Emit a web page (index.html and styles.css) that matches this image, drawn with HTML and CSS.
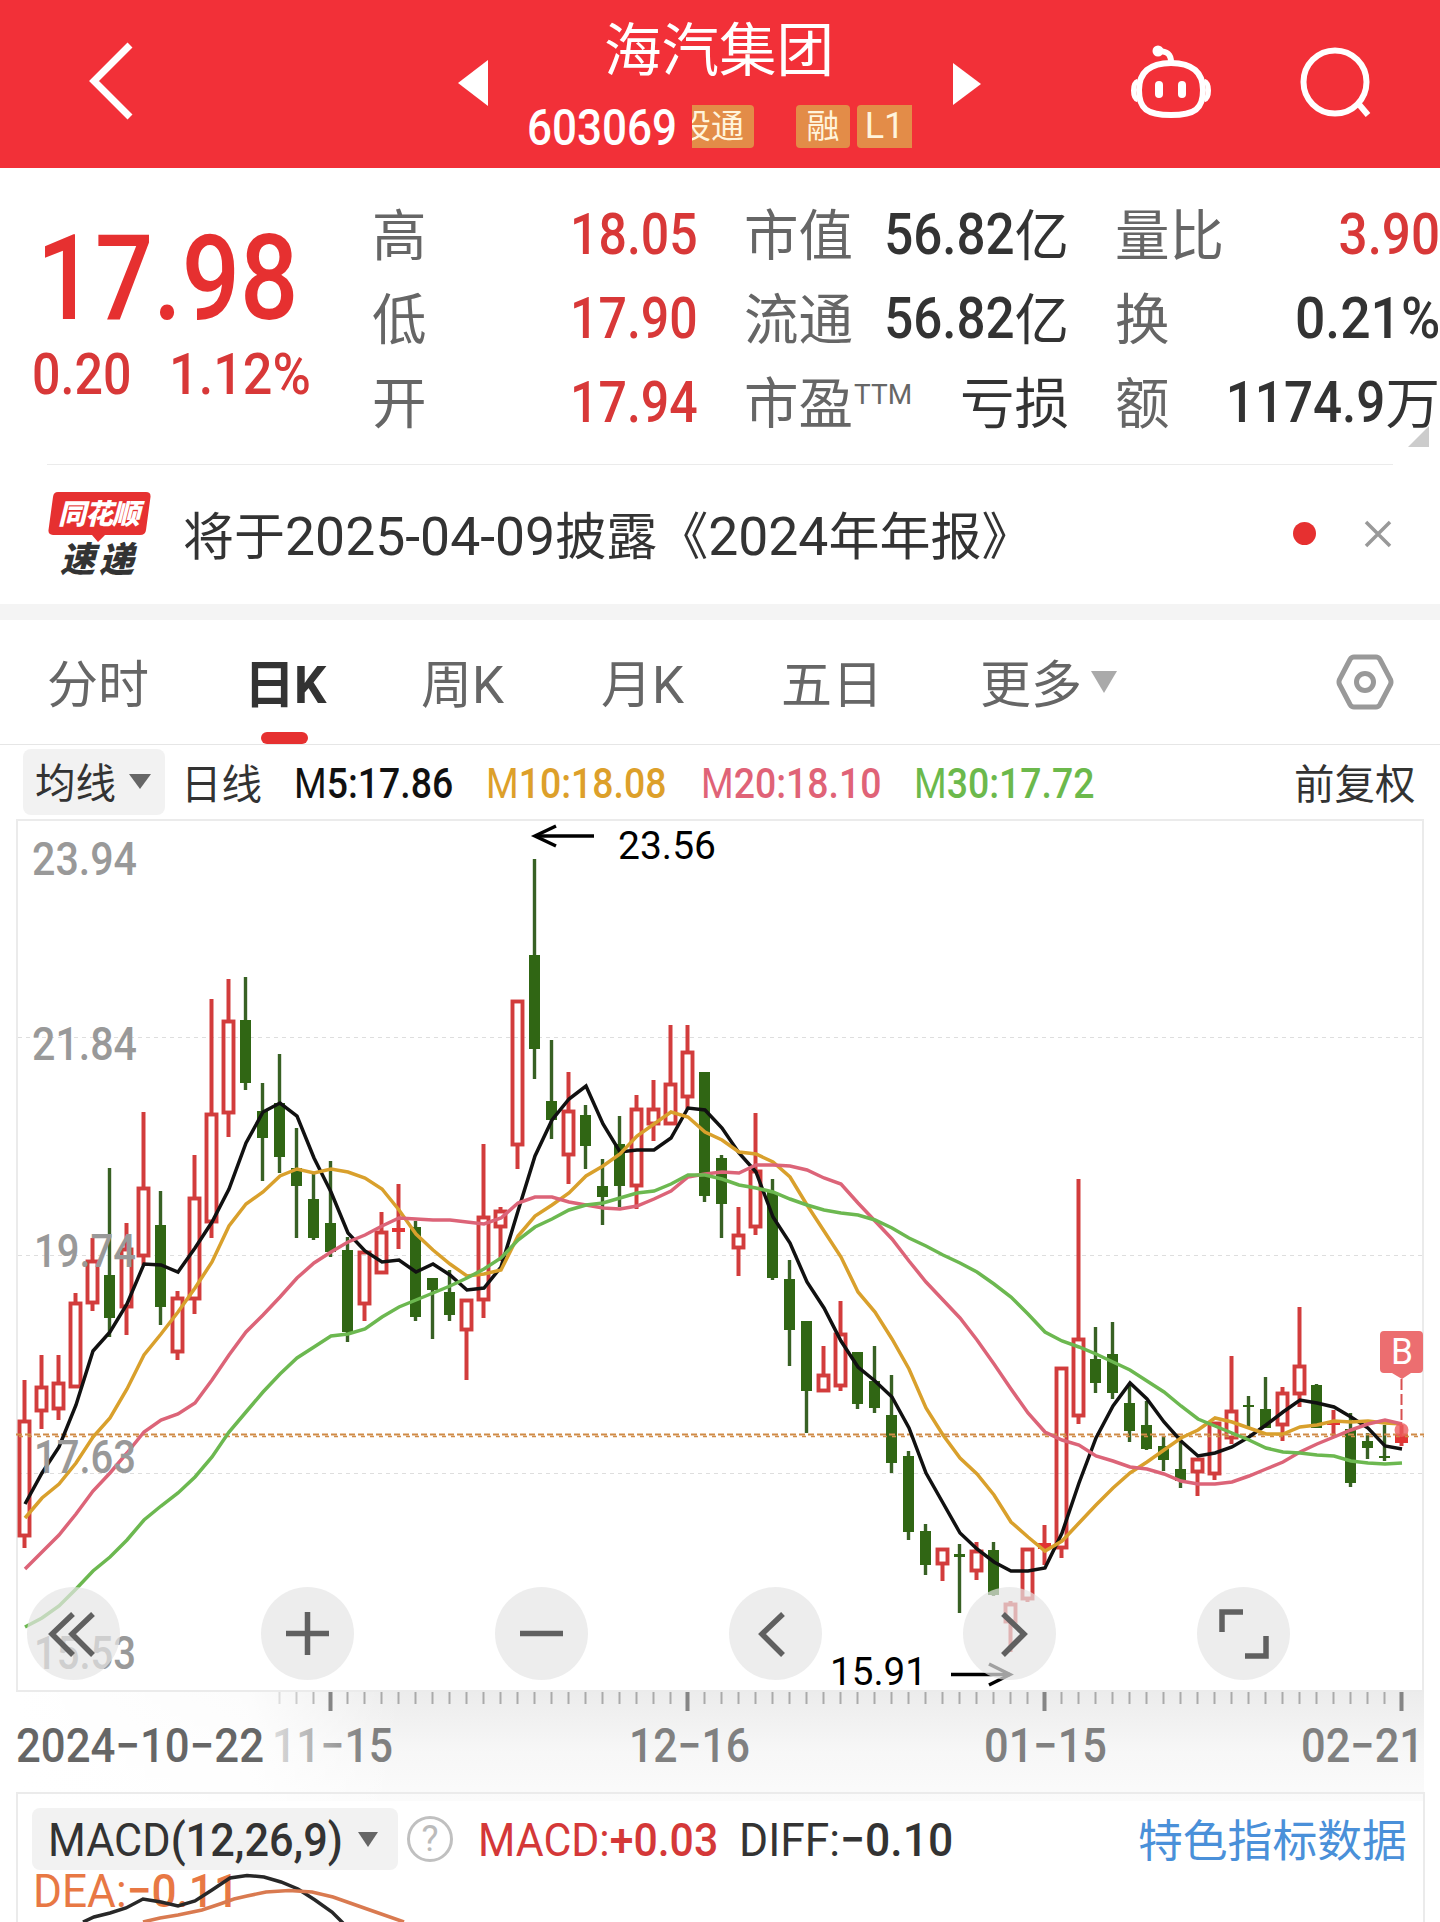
FILE: index.html
```
<!DOCTYPE html>
<html lang="zh-CN">
<head>
    <meta charset="UTF-8">
    <meta name="viewport" content="width=device-width, initial-scale=1.0">
    <title>海汽集团 603069</title>
    <link rel="stylesheet" href="styles.css">
</head>
<body>
    <header class="header">
        <svg class="back" width="50" height="84" viewBox="0 0 50 84"><path d="M42 6 L6 42 L42 78"/></svg>
        <svg class="prev" width="30" height="46" viewBox="0 0 30 46"><path d="M30 0 V46 L0 23z"/></svg>
        <div class="stock">
            <h1>海汽集团</h1>
            <div class="code-row">
                <span class="num code">603069</span>
                <span class="tag tag-cut"><span>设通</span></span>
                <span class="tag tag-rong">融</span>
                <span class="tag tag-l1">L1</span>
            </div>
        </div>
        <svg class="next" width="28" height="42" viewBox="0 0 28 42"><path d="M0 0 V42 L28 21z"/></svg>
        <svg class="robot" width="84" height="78" viewBox="0 0 84 78">
            <path d="M42 20 C64 20 74 30 74 47 C74 66 66 72 42 72 C18 72 10 66 10 47 C10 30 20 20 42 20z"/>
            <path d="M42 19 C42 11 38 8 29 8"/>
            <path class="ear" d="M9 38 C3 40 3 55 9 57 M75 38 C81 40 81 55 75 57"/>
            <circle class="solid" cx="29" cy="8" r="5.5"/>
            <rect class="solid" x="26" y="38" width="8" height="17" rx="4"/>
            <rect class="solid" x="49" y="38" width="8" height="17" rx="4"/>
        </svg>
        <svg class="search" width="76" height="76" viewBox="0 0 76 76">
            <circle cx="38" cy="36" r="31.5"/>
            <path d="M60 56 L71 69"/>
        </svg>
    </header>

    <section class="quote">
        <div class="price">
            <div class="num last">17.98</div>
            <div class="change"><span class="num">0.20</span><span class="num">1.12%</span></div>
        </div>
        <dl class="stats">
            <dt>高</dt><dd class="up"><span class="num">18.05</span></dd>
            <dt>市值</dt><dd><span class="num">56.82</span>亿</dd>
            <dt>量比</dt><dd class="up"><span class="num">3.90</span></dd>
            <dt>低</dt><dd class="up"><span class="num">17.90</span></dd>
            <dt>流通</dt><dd><span class="num">56.82</span>亿</dd>
            <dt>换</dt><dd><span class="num percent">0.21%</span></dd>
            <dt>开</dt><dd class="up"><span class="num">17.94</span></dd>
            <dt>市盈<sup>TTM</sup></dt><dd>亏损</dd>
            <dt>额</dt><dd><span class="num">1174.9</span>万</dd>
        </dl>
        <svg class="corner" width="21" height="21" viewBox="0 0 21 21"><path d="M21 0 V21 H0z"/></svg>
    </section>

    <section class="news">
        <div class="news-logo">
            <svg width="104" height="50" viewBox="0 0 104 50"><path d="M10 0 H98 Q103 0 102.500 5 L98 38 Q97.500 43 92 43 H57 L50 50 L44 43 H5 Q0 43 .5 38 L5 5 Q5.500 0 10 0z"/></svg>
            <b class="logo-top">同花顺</b>
            <b class="logo-bottom">速递</b>
        </div>
        <p>将于<span>2025-04-09</span>披露《<span>2024</span>年年报》</p>
        <i class="dot"></i>
        <svg class="close" width="28" height="28" viewBox="0 0 28 28"><path d="M2 2 L26 26 M26 2 L2 26"/></svg>
    </section>

    <nav class="tabs">
        <a>分时</a>
        <a class="active">日K</a>
        <a>周K</a>
        <a>月K</a>
        <a>五日</a>
        <a class="more">更多<svg width="26" height="22" viewBox="0 0 26 22"><path d="M0 0 H26 L13 22z"/></svg></a>
        <svg class="setting" width="58" height="56" viewBox="0 0 58 56">
            <path d="M18 3 H40 Q42.500 3 44 5.500 L54.500 25.500 Q55.500 28 54.500 30.500 L44 50.500 Q42.500 53 40 53 H18 Q15.500 53 14 50.500 L3.500 30.500 Q2.500 28 3.500 25.500 L14 5.500 Q15.500 3 18 3z"/>
            <circle cx="29" cy="28" r="8.500"/>
        </svg>
    </nav>

    <div class="ma-row">
        <span class="pill">均线<svg width="22" height="15" viewBox="0 0 22 15"><path d="M0 0 H22 L11 15z"/></svg></span>
        <span class="period">日线</span>
        <span class="num ma5"><i>M</i>5:17.86</span>
        <span class="num ma10"><i>M</i>10:18.08</span>
        <span class="num ma20"><i>M</i>20:18.10</span>
        <span class="num ma30"><i>M</i>30:17.72</span>
        <span class="adjust">前复权</span>
    </div>

    <section class="chart">
        <svg id="kline" width="1440" height="873" viewBox="0 819 1440 873"></svg>
        <div class="tools">
            <button><svg viewBox="0 0 93 93"><path d="M46 27 L25 47 L46 68 M66 27 L45 47 L66 68"/></svg></button>
            <button><svg viewBox="0 0 93 93"><path d="M46.500 25 V68 M25 46.500 H68"/></svg></button>
            <button><svg viewBox="0 0 93 93"><path d="M25 46.500 H68"/></svg></button>
            <button><svg viewBox="0 0 93 93"><path d="M54 27 L33 47 L54 68"/></svg></button>
            <button><svg viewBox="0 0 93 93"><path d="M40 27 L61 47 L40 68"/></svg></button>
            <button><svg viewBox="0 0 93 93"><path d="M25 45 V25 H46 M69 49 V69 H48"/></svg></button>
        </div>
    </section>

    <section class="axis">
        <svg id="axis" width="1440" height="109" viewBox="0 1692 1440 109"></svg>
    </section>

    <section class="macd">
        <div class="macd-row">
            <span class="pill"><span class="num"><i>MACD</i>(12,26,9)</span><svg width="20" height="15" viewBox="0 0 20 15"><path d="M0 0 H20 L10 15z"/></svg></span>
            <span class="help">?</span>
            <span class="num macd-val"><i>MACD:</i>+0.03</span>
            <span class="num diff-val"><i>DIFF:</i>−0.10</span>
            <a class="feature">特色指标数据</a>
        </div>
        <span class="num dea-val"><i>DEA:</i>−0.11</span>
        <svg class="macd-lines" width="1440" height="60" viewBox="0 1862 1440 60">
            <path class="diff" d="M83 1922 L94 1917 L110 1913 L126 1908 L143 1899 L161 1902 L178 1906 L195 1901 L212 1890 L230 1878 L247 1875.500 L264 1877 L281 1882 L298 1889 L315 1900 L332 1912 L343 1923"/>
            <path class="dea" d="M143 1922 L160 1918 L178 1915 L202 1910 L220 1904 L234 1899 L247 1896 L266 1892 L289 1890.500 L312 1892 L333 1897 L350 1903 L367 1909 L404 1922"/>
        </svg>
    </section>

    <script src="chart.js"></script>
</body>
</html>
```
FILE: styles.css
```
* {
    box-sizing: border-box;
}
body {
    margin: 0;
    width: 1440px;
    height: 1922px;
    overflow: hidden;
    background: #fff;
    color: #333;
    font-family: Roboto, "Noto Sans CJK SC", sans-serif;
}
h1, p, dl, dd {
    margin: 0;
}
i {
    font-style: normal;
    font-weight: 400;
}
svg {
    display: block;
    flex: none;
}
/* narrow figures */
.num {
    display: inline-block;
    font-weight: 500;
    white-space: nowrap;
    transform: scaleX(.88);
    transform-origin: left center;
}

/* header */
.header {
    display: flex;
    height: 168px;
    background: #f23038;
    color: #fff;
}
.header path,
.header circle {
    fill: none;
    stroke: #fff;
    stroke-width: 6;
}
.header .back path {
    stroke-width: 7;
}
.header .prev path,
.header .next path,
.header .solid {
    fill: #fff;
    stroke: none;
}
.back {
    margin: 39px 0 0 88px;
}
.prev {
    margin: 60px 0 0 320px;
}
.stock {
    width: 424px;
    margin: 0 0 0 41px;
}
.stock h1 {
    height: 101px;
    padding-left: 75px;
    font-size: 57.5px;
    font-weight: 400;
    line-height: 104px;
    white-space: nowrap;
}
.code-row {
    display: flex;
    height: 54px;
    align-items: center;
}
.code {
    width: 163px;
    margin-left: -2px;
    font-size: 50px;
    line-height: 54px;
}
.tag {
    height: 43px;
    margin-top: -3px;
    background: #e38c48;
    border-radius: 4px;
    color: #fff4dc;
    font-size: 33px;
    line-height: 43px;
    text-align: center;
    white-space: nowrap;
}
.tag-cut {
    display: flex;
    flex: none;
    justify-content: flex-end;
    width: 62px;
    margin-left: 2px;
    padding-right: 10px;
    overflow: hidden;
    border-radius: 0 4px 4px 0;
}
.tag-rong {
    width: 54px;
    margin-left: 42px;
}
.tag-l1 {
    width: 55px;
    margin-left: 7px;
    border-radius: 4px 0 0 4px;
    font-size: 36px;
}
.next {
    margin: 63px 0 0 0;
}
.robot {
    margin: 43px 0 0 148px;
}
.robot .ear {
    stroke-width: 5;
}
.search {
    margin: 46px 0 0 84px;
}

/* quote */
.quote {
    position: relative;
    display: flex;
    height: 297px;
}
.quote::after {
    content: "";
    position: absolute;
    left: 47px;
    right: 47px;
    bottom: 0;
    height: 1px;
    background: #ebebeb;
}
.price {
    width: 374px;
    padding-top: 47px;
    color: #e63030;
}
.last {
    height: 125px;
    padding-left: 42px;
    font-size: 118px;
    line-height: 128px;
    transform: scaleX(.87);
}
.change {
    display: flex;
    padding-left: 32px;
    color: #d83838;
    font-size: 57px;
    line-height: 70px;
}
.change .num {
    width: 137px;
}
.change .num + .num {
    transform: scaleX(.915);
}
.stats {
    display: grid;
    grid-template-columns: 150px 173px 184px 137px 200px 222px;
    grid-template-rows: 84px 84px 85px;
    column-gap: 0;
    padding-top: 25px;
    font-size: 54.5px;
    line-height: 86px;
}
.stats dt {
    margin-left: -2px;
    color: #666;
    font-weight: 400;
    white-space: nowrap;
}
.stats dt:nth-of-type(3n+2) {
    margin-left: 47px;
}
.stats dt:nth-of-type(3n) {
    margin-left: 97px;
}
.stats dd {
    display: flex;
    justify-content: flex-end;
    font-weight: 400;
    white-space: nowrap;
}
.stats dd:nth-of-type(3n+2) {
    margin-right: -51px;
}
.stats .num {
    margin-top: -1px;
    font-size: 57.5px;
    transform: scaleX(.89);
    transform-origin: right center;
}
.stats dd:nth-of-type(3n+1) .num {
    margin-right: -1px;
    transform: scaleX(.87);
}
.stats .percent {
    transform: scaleX(.93);
}
.stats .up {
    color: #d83838;
}
.stats sup {
    display: inline-block;
    margin-left: 1px;
    font-size: 28px;
    line-height: 28px;
    vertical-align: 19px;
}
.corner {
    position: absolute;
    left: 1408px;
    top: 258px;
    fill: #ccc;
}

/* news */
.news {
    display: flex;
    height: 139px;
}
.news-logo {
    position: relative;
    width: 135px;
    margin: 27px 0 0 48px;
    fill: #e63030;
    font-style: italic;
    line-height: 34px;
}
.logo-top {
    position: absolute;
    left: 10px;
    top: 6px;
    color: #fff;
    font-size: 28px;
    font-weight: 900;
    letter-spacing: -1px;
}
.logo-bottom {
    position: absolute;
    left: 12px;
    top: 52px;
    font-size: 35px;
    font-weight: 900;
    letter-spacing: 4px;
}
.news p {
    width: 1110px;
    color: #333;
    font-size: 51px;
    line-height: 144px;
    white-space: nowrap;
}
.news p span {
    font-size: 53.5px;
}
.dot {
    width: 23px;
    height: 23px;
    margin: 57px 0 0 0;
    border-radius: 50%;
    background: #e63030;
}
.close {
    margin: 55px 0 0 48px;
    fill: none;
    stroke: #999;
    stroke-width: 3.5;
}

/* tabs */
.tabs {
    display: grid;
    grid-template-columns: 198px 176px 180px 180px 199px 356px auto;
    height: 141px;
    padding-left: 47px;
    border-top: 16px solid #f4f4f4;
    border-bottom: 1px solid #e6e6e6;
    color: #666;
    font-size: 51px;
    line-height: 131px;
}
.tabs .active {
    position: relative;
    left: -1px;
    color: #333;
    font-weight: 700;
    letter-spacing: -1px;
}
.tabs .active::after {
    content: "";
    position: absolute;
    left: 17px;
    top: 112px;
    width: 47px;
    height: 12px;
    border-radius: 6px;
    background: #e63030;
}
.more {
    display: flex;
    align-items: center;
    gap: 9px;
    fill: #aaa;
}
.more svg {
    margin-top: -8px;
}
.setting {
    margin-top: 34px;
    fill: none;
    stroke: #999;
    stroke-width: 5;
}

/* moving averages */
.ma-row {
    display: grid;
    grid-template-columns: 158px 113px 192px 215px 213px 380px auto;
    height: 74px;
    padding-left: 23px;
    font-size: 42.5px;
    line-height: 77px;
}
.pill {
    display: flex;
    align-items: center;
    border-radius: 8px;
    background: #f2f2f2;
    fill: #666;
}
.ma-row .pill {
    width: 142px;
    height: 66px;
    margin-top: 4px;
    padding-left: 12px;
    gap: 13px;
    font-size: 40.5px;
    line-height: 66px;
    padding-top: 4px;
}
.ma-row .pill svg {
    margin-top: -5px;
}
.period,
.adjust {
    font-size: 40.5px;
    line-height: 81px;
    white-space: nowrap;
}
.ma5 { color: #111; }
.ma10 { color: #dda02a; }
.ma20 { color: #e06377; }
.ma30 { color: #6cb94c; }

/* chart */
.chart {
    position: relative;
    height: 873px;
}
.tools {
    position: absolute;
    left: 27px;
    top: 768px;
    display: flex;
    gap: 141px;
}
.tools button {
    width: 93px;
    height: 93px;
    padding: 0;
    border: 0;
    border-radius: 50%;
    background: rgba(229, 229, 229, .7);
}
.tools svg {
    width: 93px;
    height: 93px;
    fill: none;
    stroke: #606060;
    stroke-width: 5.5;
}
#kline text {
    font-family: Roboto, sans-serif;
}
#kline .scale {
    fill: #999;
    font-size: 46px;
    font-weight: 500;
}
#kline .mark {
    fill: #000;
    font-size: 39px;
}
#kline .badge {
    fill: #fff;
    font-size: 36px;
}
.axis {
    height: 100px;
}
#axis text {
    font-family: Roboto, sans-serif;
    font-size: 47.5px;
    font-weight: 500;
}

/* macd */
.macd {
    position: relative;
    height: 130px;
    margin: 0 15px 0 16px;
    border: 2px solid #ebebeb;
    border-bottom: 0;
    font-size: 47px;
}
.macd-row {
    display: grid;
    grid-template-columns: 375px 71px 261px 399px auto;
    padding: 14px 0 0 14px;
    line-height: 64px;
}
.macd-row > .num,
.macd .dea-val {
    transform: scaleX(.91);
}
.macd .diff-val {
    transform: scaleX(.945);
}
.macd .pill {
    width: 366px;
    height: 62px;
    padding-left: 16px;
    line-height: 64px;
}
.macd .pill .num {
    width: 310px;
    padding-top: 2px;
    transform: scaleX(.92);
}
.help {
    width: 46px;
    height: 46px;
    margin-top: 8px;
    border: 3px solid #c0c0c0;
    border-radius: 50%;
    color: #bbb;
    font-size: 36px;
    line-height: 41px;
    text-align: center;
}
.macd-val { color: #d43838; }
.feature {
    color: #4a90d9;
    font-size: 44.8px;
    line-height: 68px;
    white-space: nowrap;
}
.macd .dea-val {
    display: block;
    margin: -13px 0 0 15px;
    color: #e87844;
    line-height: 56px;
    transform: scaleX(.94);
}
.macd-lines {
    position: absolute;
    left: -18px;
    bottom: 0;
    fill: none;
    stroke-width: 3.5;
}
.macd-lines .diff { stroke: #282828; }
.macd-lines .dea { stroke: #d97a50; }
```
FILE: chart.js
```
// [high, body top, body bottom, low, direction] in chart pixels
const candles = [
    [1380, 1420, 1537, 1548, 1], [1355, 1386, 1412, 1429, 1], [1355, 1382, 1410, 1420, 1], [1293, 1302, 1388, 1388, 1],
    [1238, 1260, 1304, 1311, 1], [1168, 1275, 1318, 1337, 0], [1223, 1248, 1308, 1335, 1], [1112, 1187, 1257, 1265, 1],
    [1191, 1225, 1307, 1325, 0], [1291, 1297, 1353, 1360, 1], [1155, 1197, 1300, 1314, 1], [999, 1113, 1223, 1238, 1],
    [979, 1020, 1114, 1137, 1], [977, 1020, 1083, 1090, 0], [1083, 1111, 1138, 1181, 0], [1054, 1103, 1157, 1173, 0],
    [1128, 1168, 1186, 1238, 0], [1174, 1199, 1238, 1240, 0], [1161, 1223, 1252, 1257, 0], [1237, 1250, 1332, 1342, 0],
    [1251, 1251, 1305, 1321, 1], [1212, 1231, 1274, 1274, 1], [1184, 1228, 1232, 1249, 1], [1221, 1227, 1317, 1321, 0],
    [1278, 1278, 1290, 1339, 0], [1270, 1292, 1315, 1321, 0], [1299, 1299, 1331, 1380, 1], [1144, 1216, 1301, 1318, 1],
    [1207, 1210, 1228, 1261, 1], [1000, 1000, 1146, 1169, 1], [859, 955, 1049, 1079, 0], [1040, 1101, 1120, 1139, 0],
    [1072, 1110, 1156, 1184, 1], [1105, 1115, 1146, 1169, 0], [1159, 1186, 1197, 1225, 0], [1116, 1144, 1186, 1207, 0],
    [1095, 1108, 1187, 1209, 1], [1080, 1108, 1125, 1141, 1], [1025, 1083, 1125, 1125, 1], [1025, 1051, 1098, 1109, 1],
    [1072, 1072, 1196, 1202, 0], [1155, 1158, 1204, 1238, 0], [1207, 1234, 1249, 1276, 1], [1113, 1170, 1228, 1235, 1],
    [1179, 1192, 1278, 1280, 0], [1260, 1279, 1330, 1366, 0], [1321, 1321, 1391, 1433, 0], [1346, 1374, 1392, 1392, 1],
    [1301, 1333, 1387, 1391, 1], [1352, 1352, 1404, 1409, 0], [1346, 1381, 1408, 1413, 0], [1375, 1415, 1463, 1473, 0],
    [1451, 1456, 1532, 1540, 0], [1524, 1531, 1565, 1575, 0], [1548, 1548, 1565, 1581, 1], [1544, 1554, 1557, 1613, 0],
    [1542, 1550, 1572, 1580, 1], [1542, 1550, 1595, 1596, 0], [1601, 1603, 1623, 1652, 1], [1548, 1548, 1600, 1602, 1],
    [1525, 1543, 1549, 1565, 1], [1367, 1367, 1549, 1558, 1], [1179, 1338, 1417, 1424, 1], [1327, 1359, 1383, 1393, 0],
    [1322, 1354, 1393, 1399, 0], [1385, 1403, 1431, 1442, 0], [1401, 1425, 1449, 1450, 0], [1436, 1446, 1460, 1471, 0],
    [1436, 1469, 1481, 1488, 0], [1458, 1458, 1473, 1496, 1], [1422, 1422, 1475, 1480, 1], [1356, 1410, 1439, 1444, 1],
    [1396, 1405, 1407, 1427, 0], [1377, 1409, 1428, 1428, 0], [1387, 1392, 1426, 1441, 1], [1307, 1365, 1395, 1407, 1],
    [1384, 1385, 1428, 1428, 0], [1410, 1423, 1425, 1437, 1], [1413, 1429, 1483, 1487, 0], [1433, 1441, 1448, 1459, 0],
    [1425, 1456, 1458, 1461, 0], [1425, 1434, 1443, 1446, 2]
];

const averages = [
    ['#111', [1504, 1473, 1447, 1405, 1351, 1332, 1304, 1264, 1265, 1272, 1248, 1222, 1189, 1143, 1112, 1103, 1116, 1158, 1192, 1233, 1251, 1262, 1260, 1272, 1264, 1275, 1290, 1288, 1267, 1211, 1156, 1120, 1099, 1086, 1124, 1152, 1150, 1150, 1138, 1108, 1110, 1128, 1153, 1172, 1217, 1243, 1282, 1308, 1341, 1367, 1381, 1397, 1428, 1473, 1503, 1533, 1549, 1562, 1571, 1571, 1568, 1533, 1483, 1438, 1406, 1383, 1399, 1422, 1441, 1456, 1453, 1447, 1437, 1425, 1412, 1400, 1403, 1407, 1417, 1428, 1446, 1449]],
    ['#d9a02c', [1518, 1498, 1484, 1463, 1437, 1418, 1389, 1355, 1334, 1312, 1288, 1262, 1226, 1204, 1192, 1176, 1169, 1173, 1169, 1172, 1178, 1189, 1210, 1234, 1250, 1264, 1276, 1274, 1270, 1236, 1216, 1205, 1193, 1176, 1166, 1154, 1136, 1124, 1112, 1117, 1132, 1140, 1152, 1154, 1162, 1177, 1205, 1231, 1257, 1292, 1312, 1339, 1369, 1408, 1435, 1458, 1474, 1495, 1522, 1537, 1551, 1541, 1523, 1505, 1488, 1473, 1462, 1450, 1438, 1430, 1418, 1422, 1428, 1434, 1434, 1427, 1425, 1421, 1422, 1421, 1423, 1424]],
    ['#dc6478', [1569, 1552, 1535, 1514, 1491, 1473, 1453, 1432, 1420, 1414, 1403, 1380, 1355, 1332, 1315, 1297, 1278, 1263, 1252, 1242, 1235, 1226, 1218, 1219, 1220, 1220, 1222, 1224, 1218, 1203, 1197, 1197, 1202, 1205, 1208, 1209, 1206, 1199, 1191, 1177, 1174, 1172, 1173, 1165, 1165, 1166, 1170, 1178, 1184, 1203, 1221, 1239, 1261, 1282, 1300, 1318, 1340, 1364, 1389, 1413, 1432, 1440, 1445, 1456, 1461, 1467, 1469, 1474, 1481, 1484, 1484, 1482, 1476, 1469, 1462, 1452, 1444, 1437, 1430, 1424, 1420, 1424]],
    ['#6cb850', [1627, 1618, 1606, 1589, 1571, 1557, 1540, 1520, 1506, 1493, 1477, 1457, 1432, 1412, 1392, 1374, 1358, 1347, 1336, 1334, 1329, 1317, 1307, 1300, 1293, 1286, 1278, 1269, 1258, 1240, 1227, 1219, 1210, 1205, 1203, 1198, 1193, 1191, 1184, 1175, 1175, 1179, 1185, 1188, 1192, 1199, 1205, 1210, 1213, 1215, 1220, 1228, 1238, 1246, 1255, 1263, 1272, 1284, 1297, 1314, 1332, 1341, 1347, 1354, 1362, 1370, 1381, 1392, 1406, 1419, 1426, 1433, 1440, 1448, 1452, 1453, 1455, 1456, 1461, 1463, 1464, 1463]]
];

const x = i => 24.5 + i * 17;
const line = (x1, y1, x2, y2, color, w, extra = '') =>
    `<path d="M${x1} ${y1} L${x2} ${y2}" stroke="${color}" stroke-width="${w}" fill="none" ${extra}/>`;
const text = (cls, tx, ty, w, s, extra = '') =>
    `<text class="${cls}" x="${tx}" y="${ty}" textLength="${w}" lengthAdjust="spacingAndGlyphs" ${extra}>${s}</text>`;

let out = '<rect x="17" y="820" width="1406" height="871" fill="none" stroke="#ebebeb" stroke-width="2"/>';
[1037.5, 1255.5, 1473.5].forEach(y => {
    out += line(18, y, 1422, y, '#dedede', 1, 'stroke-dasharray="4 4"');
});

candles.forEach(([high, top, bottom, low, dir], i) => {
    const cx = x(i);
    if (dir === 0) {
        out += line(cx, high, cx, low, '#386124', 3.4);
        out += `<rect x="${cx - 5.5}" y="${top}" width="11" height="${bottom - top}" fill="#306614"/>`;
    } else if (dir === 2 || bottom - top < 8) {
        out += line(cx, high, cx, low, '#d23c3c', 4);
        out += `<rect x="${cx - 6.5}" y="${top}" width="13" height="${bottom - top}" fill="#e23434"/>`;
    } else {
        out += line(cx, high, cx, top + 1, '#d23c3c', 4) + line(cx, bottom - 1, cx, low, '#d23c3c', 4);
        out += `<rect x="${cx - 5}" y="${top + 1.5}" width="10" height="${bottom - top - 3}" fill="none" stroke="#d23c3c" stroke-width="3.900"/>`;
    }
});

out += line(16, 1434.5, 1424, 1434.5, '#d08c48', 2, 'stroke-dasharray="6 3"');
out += line(19, 1436.5, 1424, 1436.5, '#d08c48', 1.5, 'stroke-dasharray="4 5"');

averages.forEach(([color, ys]) => {
    out += `<polyline points="${ys.map((y, i) => (x(i) + .5) + ',' + y).join(' ')}" fill="none" stroke="${color}" stroke-width="3.500"/>`;
});

[['23.94', 32, 875], ['21.84', 32, 1060], ['19.74', 34, 1267], ['17.63', 34, 1473], ['15.53', 34, 1669]].forEach(([s, tx, ty]) => {
    out += text('scale', tx, ty, tx === 32 ? 105 : 102, s);
});

// highest and lowest price marks
out += line(535, 836, 594, 836, '#000', 3.5) + '<path d="M556 826 L535 836 L556 846" fill="none" stroke="#000" stroke-width="3.500"/>';
out += text('mark', 618, 859, 98, '23.56');
out += line(951, 1674.5, 1010, 1674.5, '#000', 3.5) + '<path d="M989 1664 L1010 1674.500 L989 1685" fill="none" stroke="#000" stroke-width="3.500"/>';
out += text('mark', 830, 1685, 97, '15.91');

// buy point
out += line(1401.5, 1379, 1401.5, 1425, '#d85050', 2, 'stroke-dasharray="11 4"');
out += '<circle cx="1401.500" cy="1430" r="7" fill="#ee5a5c" opacity=".8"/>';
out += '<path d="M1384 1331 H1419 Q1423 1331 1423 1335 V1369 Q1423 1373 1419 1373 H1411 L1402 1379 L1392 1373 H1384 Q1380 1373 1380 1369 V1335 Q1380 1331 1384 1331z" fill="#ec6e70"/>';
out += text('badge', 1391, 1364, 22, 'B');
document.getElementById('kline').innerHTML = out;

// date axis
let axis = `<defs>
    <linearGradient id="shade" x1="0" y1="0" x2="0" y2="1"><stop offset="0" stop-color="#ececec"/><stop offset=".55" stop-color="#f7f7f7"/><stop offset="1" stop-color="#fbfbfb"/></linearGradient>
    <linearGradient id="fade" gradientUnits="userSpaceOnUse" x1="17" y1="0" x2="400" y2="0"><stop offset="0" stop-color="#fff"/><stop offset=".6" stop-color="#fff" stop-opacity=".85"/><stop offset="1" stop-color="#fff" stop-opacity="0"/></linearGradient>
    <linearGradient id="ink" gradientUnits="userSpaceOnUse" x1="265" y1="0" x2="365" y2="0"><stop offset="0" stop-color="#e4e4e4"/><stop offset="1" stop-color="#808080"/></linearGradient>
</defs>
<rect x="17" y="1692" width="1407" height="109" fill="url(#shade)"/><rect x="17" y="1692" width="400" height="109" fill="url(#fade)"/>`;
for (let i = 15; i < candles.length; i++) {
    const big = i % 21 === 18;
    const color = i < 18 ? ['#ddd', '#ccc', '#b8b8b8'][i - 15] : big ? '#858585' : '#aaa';
    axis += line(x(i), 1692, x(i), big ? 1711 : 1704, color, big ? 4 : 2);
}
axis += text('date', 16, 1762, 248, '2024−10−22', 'fill="#666"');
axis += text('date', 272, 1762, 121, '11−15', 'fill="url(#ink)"');
axis += text('date', 629, 1762, 121, '12−16', 'fill="#808080"');
axis += text('date', 984, 1762, 123, '01−15', 'fill="#808080"');
axis += text('date', 1301, 1762, 123, '02−21', 'fill="#808080"');
document.getElementById('axis').innerHTML = axis;
```
